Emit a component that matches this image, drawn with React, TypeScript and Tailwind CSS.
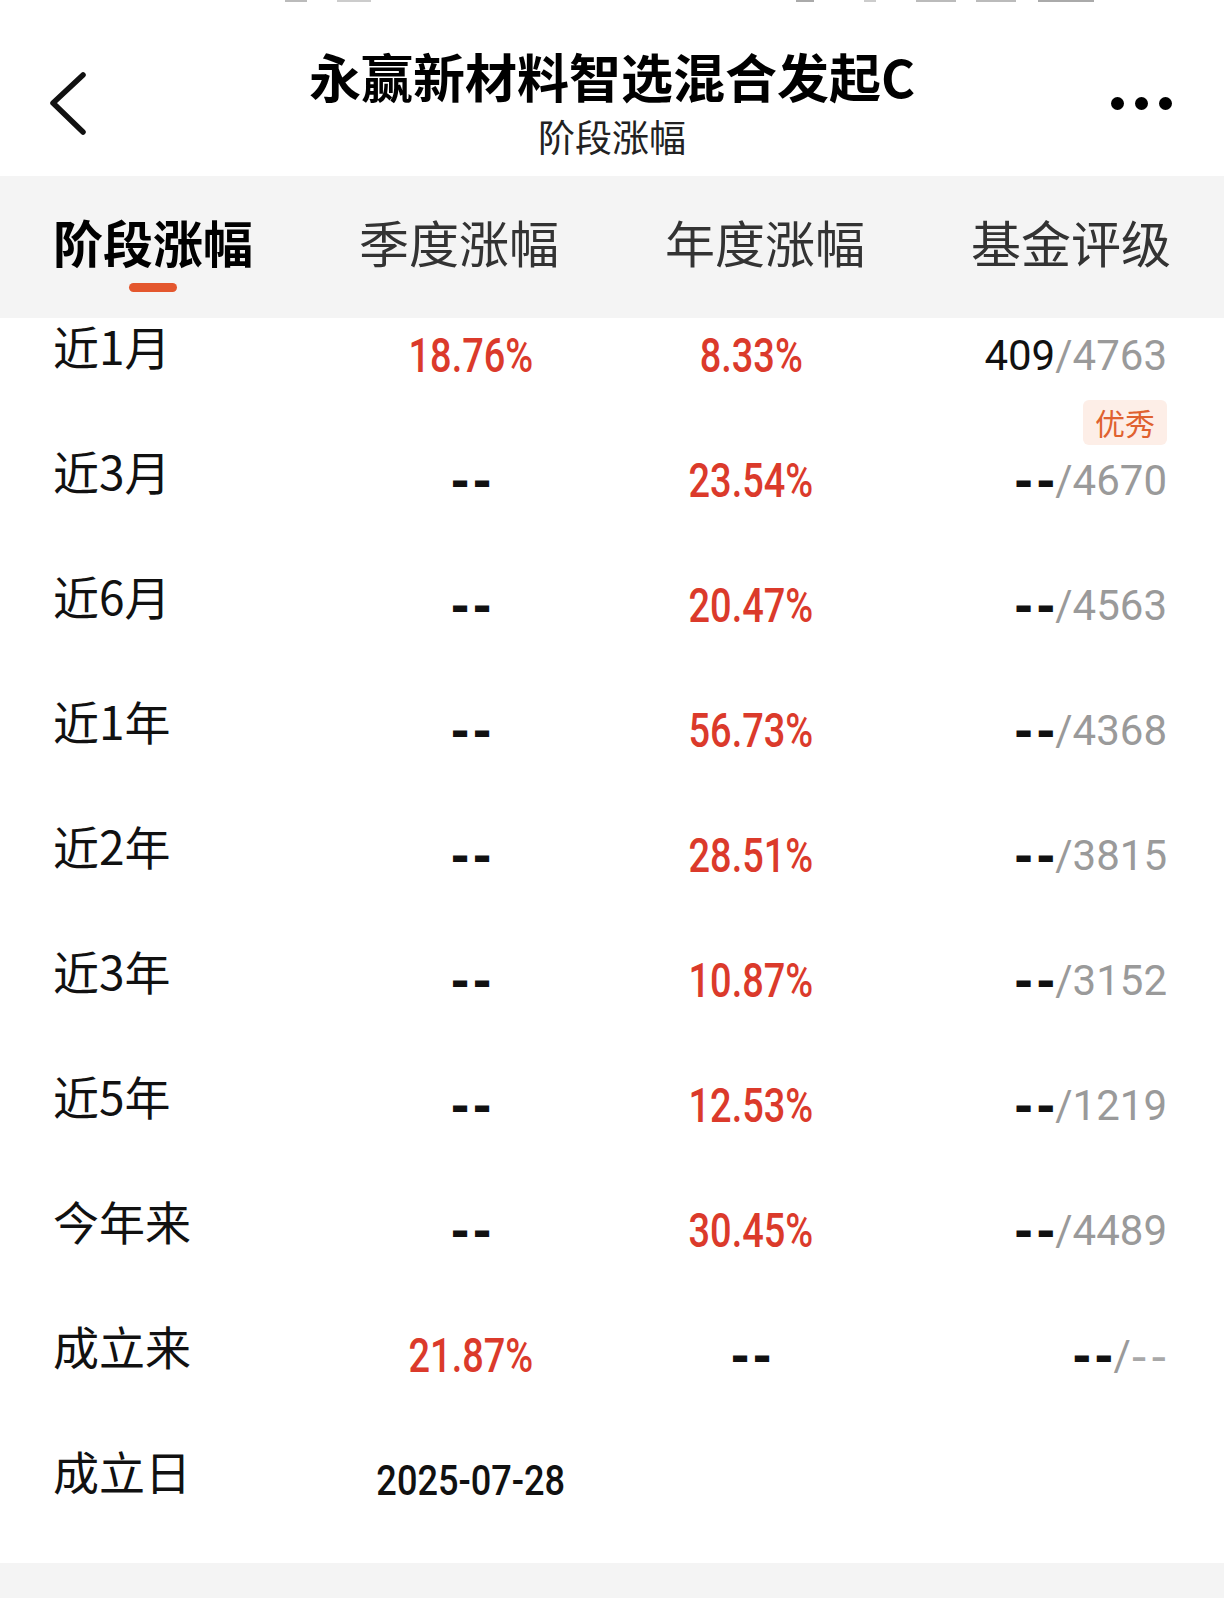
import React from 'react';

type Row = {
  label: string;
  quarter: string | null;
  year: string | null;
  rank: string;
  total: string;
};

const rows: Row[] = [
  { label: '近1月', quarter: '18.76%', year: '8.33%', rank: '409', total: '4763' },
  { label: '近3月', quarter: null, year: '23.54%', rank: '--', total: '4670' },
  { label: '近6月', quarter: null, year: '20.47%', rank: '--', total: '4563' },
  { label: '近1年', quarter: null, year: '56.73%', rank: '--', total: '4368' },
  { label: '近2年', quarter: null, year: '28.51%', rank: '--', total: '3815' },
  { label: '近3年', quarter: null, year: '10.87%', rank: '--', total: '3152' },
  { label: '近5年', quarter: null, year: '12.53%', rank: '--', total: '1219' },
  { label: '今年来', quarter: null, year: '30.45%', rank: '--', total: '4489' },
  { label: '成立来', quarter: '21.87%', year: null, rank: '--', total: '--' },
];

const tabs = ['阶段涨幅', '季度涨幅', '年度涨幅', '基金评级'];

// tracking spreads the two bars apart; the negative margin drops the trailing gap
function Dash({ className = '' }: { className?: string }) {
  return (
    <span className={`-mr-[3px] font-['DejaVu_Sans',sans-serif] text-[46px] tracking-[3px] leading-none ${className}`}>
      --
    </span>
  );
}

function Pct({ value }: { value: string | null }) {
  if (!value) return <Dash className="font-bold text-[#111]" />;
  return (
    <span className="inline-block scale-x-[0.79] font-['Roboto',sans-serif] font-medium text-[48px] leading-none text-[#db3a2b]">
      {value}
    </span>
  );
}

export default function App() {
  return (
    <div className="w-[1224px] h-[1598px] overflow-hidden bg-[#f4f4f4] font-['Noto_Sans_CJK_SC',sans-serif] text-[#111]">
      {/* status bar remnants */}
      <div className="h-[6px] bg-white flex items-start">
        <div className="ml-[285px] w-[22px] h-[2px] bg-[#bbb]" />
        <div className="ml-[30px] w-[34px] h-[2px] bg-[#ccc]" />
        <div className="ml-[425px] w-[18px] h-[2px] bg-[#aaa]" />
        <div className="ml-[50px] w-[12px] h-[2px] bg-[#ccc]" />
        <div className="ml-[40px] w-[40px] h-[2px] bg-[#bbb]" />
        <div className="ml-[20px] w-[40px] h-[2px] bg-[#bbb]" />
        <div className="ml-[22px] w-[56px] h-[2px] bg-[#aaa]" />
      </div>

      {/* header */}
      <div className="h-[170px] bg-white grid grid-cols-[200px_1fr_200px]">
        <div>
          <svg width="42" height="68" viewBox="0 0 42 68" className="ml-[48px] mt-[64px]">
            <path d="M35 5 L5 33 L35 62" fill="none" stroke="#111" strokeWidth="5.5" strokeLinecap="round" strokeLinejoin="round" />
          </svg>
        </div>
        <div className="flex flex-col items-center pt-[40px]">
          <div className="text-[52px] leading-[60px] font-bold text-black">永赢新材料智选混合发起C</div>
          <div className="mt-[8px] text-[37px] leading-[44px] text-[#222]">阶段涨幅</div>
        </div>
        <div className="flex justify-end pr-[52px]">
          <div className="flex gap-[11px] mt-[91px]">
            <span className="w-[13px] h-[13px] rounded-full bg-black" />
            <span className="w-[13px] h-[13px] rounded-full bg-black" />
            <span className="w-[13px] h-[13px] rounded-full bg-black" />
          </div>
        </div>
      </div>

      {/* tabs */}
      <div className="relative z-10 h-[142px] bg-[#f4f4f4] grid grid-cols-4">
        {tabs.map((t, i) => (
          <div key={t} className="flex flex-col items-center pt-[40px]">
            <div className={`text-[50px] leading-[50px] ${i === 0 ? 'font-bold text-black' : 'text-[#333]'}`}>{t}</div>
            {i === 0 && <div className="mt-[17px] w-[48px] h-[9px] rounded-full bg-[#e4572e]" />}
          </div>
        ))}
      </div>

      {/* table */}
      <div className="-mt-[25px] bg-white pb-[20px]">
        {rows.map((r, i) => (
          <div key={r.label} className="h-[125px] grid grid-cols-[300px_236px_324px_1fr] pl-[53px] pr-[57px] items-center">
            <div className="pb-[22px] text-[46px] leading-none">{r.label}</div>
            <div className="flex justify-center">
              <Pct value={r.quarter} />
            </div>
            <div className="flex justify-center">
              <Pct value={r.year} />
            </div>
            <div className="relative h-full flex items-center justify-end">
              <div className="flex items-center font-['Roboto',sans-serif] text-[42px] leading-none">
                {r.rank === '--' ? <Dash className="font-bold text-[#111]" /> : <span className="text-[#111]">{r.rank}</span>}
                <span className="text-[#9a9a9a]">/</span>
                {r.total === '--' ? <Dash className="text-[#a8a8a8]" /> : <span className="text-[#9a9a9a]">{r.total}</span>}
              </div>
              {i === 0 && (
                <span className="absolute right-0 top-[107px] h-[45px] px-[12px] rounded-[6px] bg-[#fdeee7] text-[#e0612f] text-[30px] leading-[45px]">
                  优秀
                </span>
              )}
            </div>
          </div>
        ))}
        <div className="h-[125px] grid grid-cols-[300px_236px_1fr] pl-[53px] pr-[57px] items-center">
          <div className="pb-[22px] text-[46px] leading-none">成立日</div>
          <div className="flex justify-center">
            <span className="inline-block scale-x-[0.86] font-['Roboto',sans-serif] font-medium text-[42px] leading-none text-[#111]">
              2025-07-28
            </span>
          </div>
          <div />
        </div>
      </div>
    </div>
  );
}
